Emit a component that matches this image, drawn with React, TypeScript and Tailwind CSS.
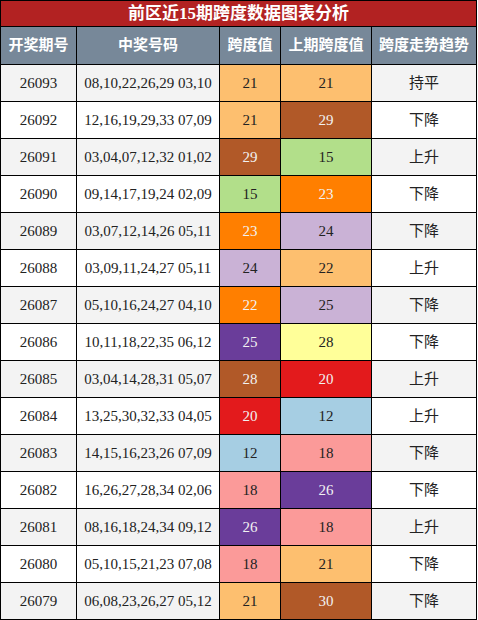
import React from "react";

const LO = "bg-[#fdbf6f] text-[#222]";
const BR = "bg-[#b15928] text-[#f2f2f2]";
const GR = "bg-[#b2df8a] text-[#222]";
const OR = "bg-[#ff7f00] text-[#f2f2f2]";
const LV = "bg-[#cab2d6] text-[#222]";
const PU = "bg-[#6a3d9a] text-[#f2f2f2]";
const YE = "bg-[#ffff99] text-[#222]";
const RE = "bg-[#e31a1c] text-[#f2f2f2]";
const BL = "bg-[#a6cee3] text-[#222]";
const PK = "bg-[#fb9a99] text-[#222]";

type Row = [string, string, string, string, string, string, string];

const rows: Row[] = [
  ["26093", "08,10,22,26,29 03,10", "21", LO, "21", LO, "持平"],
  ["26092", "12,16,19,29,33 07,09", "21", LO, "29", BR, "下降"],
  ["26091", "03,04,07,12,32 01,02", "29", BR, "15", GR, "上升"],
  ["26090", "09,14,17,19,24 02,09", "15", GR, "23", OR, "下降"],
  ["26089", "03,07,12,14,26 05,11", "23", OR, "24", LV, "下降"],
  ["26088", "03,09,11,24,27 05,11", "24", LV, "22", LO, "上升"],
  ["26087", "05,10,16,24,27 04,10", "22", OR, "25", LV, "下降"],
  ["26086", "10,11,18,22,35 06,12", "25", PU, "28", YE, "下降"],
  ["26085", "03,04,14,28,31 05,07", "28", BR, "20", RE, "上升"],
  ["26084", "13,25,30,32,33 04,05", "20", RE, "12", BL, "上升"],
  ["26083", "14,15,16,23,26 07,09", "12", BL, "18", PK, "下降"],
  ["26082", "16,26,27,28,34 02,06", "18", PK, "26", PU, "下降"],
  ["26081", "08,16,18,24,34 09,12", "26", PU, "18", PK, "上升"],
  ["26080", "05,10,15,21,23 07,08", "18", PK, "21", LO, "下降"],
  ["26079", "06,08,23,26,27 05,12", "21", LO, "30", BR, "下降"],
];

const cell = "flex items-center justify-center border-r border-black h-full";

export default function App() {
  return (
    <div className="w-[478px] h-[620px] bg-white font-['Liberation_Serif','Noto_Sans_CJK_SC',serif]">
      <div className="w-[477px] border-l border-black">
        <div className="h-[27px] border-t border-b border-r border-black bg-[#b22222] text-white text-[17px] font-bold flex items-center justify-center leading-none">
          前区近15期跨度数据图表分析
        </div>
        <div className="h-[38px] border-b border-black bg-[#778899] text-white text-[15px] font-bold flex leading-none">
          <div className={`${cell} w-[76px]`}>开奖期号</div>
          <div className={`${cell} w-[143px]`}>中奖号码</div>
          <div className={`${cell} w-[61px]`}>跨度值</div>
          <div className={`${cell} w-[91px]`}>上期跨度值</div>
          <div className={`${cell} w-[105px]`}>跨度走势趋势</div>
        </div>
        {rows.map((r, i) => {
          const bg = i % 2 === 0 ? "bg-[#f3f3f3]" : "bg-white";
          return (
            <div key={r[0]} className="h-[37px] border-b border-black flex text-[15px] text-[#222] leading-none">
              <div className={`${cell} w-[76px] ${bg}`}>{r[0]}</div>
              <div className={`${cell} w-[143px] ${bg}`}>{r[1]}</div>
              <div className={`${cell} w-[61px] ${r[3]}`}>{r[2]}</div>
              <div className={`${cell} w-[91px] ${r[5]}`}>{r[4]}</div>
              <div className={`${cell} w-[105px] ${bg}`}>{r[6]}</div>
            </div>
          );
        })}
      </div>
    </div>
  );
}
